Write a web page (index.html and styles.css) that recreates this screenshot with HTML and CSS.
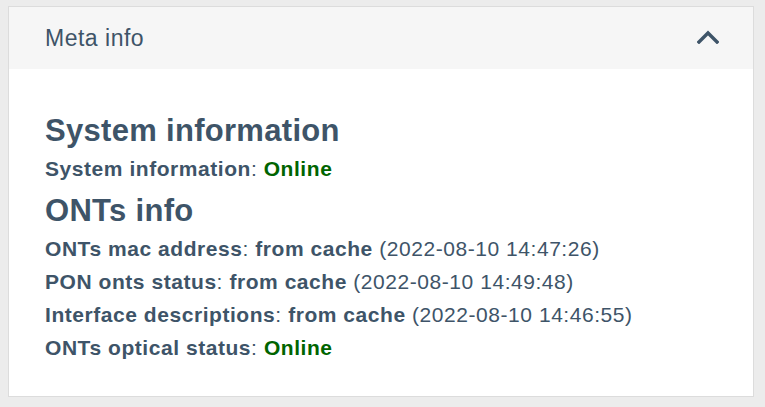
FILE: index.html
```html
<!DOCTYPE html>
<html>
<head>
<meta charset="utf-8">
<link rel="stylesheet" href="styles.css">
</head>
<body>
<div class="card">
  <div class="card-header">
    <span class="title">Meta info</span>
    <svg class="chevron" width="22" height="14" viewBox="0 0 22 14"><path d="M2 12 L11 3 L20 12" fill="none" stroke="#3e5468" stroke-width="3.4" stroke-linecap="square"/></svg>
  </div>
  <div class="card-body">
    <h3 class="section">System information</h3>
    <div class="row"><b>System information</b>: <b class="ok">Online</b></div>
    <h3 class="section second">ONTs info</h3>
    <div class="row"><b>ONTs mac address</b>: <b>from cache</b> (2022-08-10 14:47:26)</div>
    <div class="row"><b>PON onts status</b>: <b>from cache</b> (2022-08-10 14:49:48)</div>
    <div class="row"><b>Interface descriptions</b>: <b>from cache</b> (2022-08-10 14:46:55)</div>
    <div class="row"><b>ONTs optical status</b>: <b class="ok">Online</b></div>
  </div>
</div>
</body>
</html>
```
FILE: styles.css
```css
html, body {
  margin: 0;
  padding: 0;
  background: #ececec;
  font-family: "Liberation Sans", Arial, sans-serif;
  color: #3e5468;
}
body {
  padding: 6px 11px 8px 8px;
}
.card {
  background: #fff;
  border: 1px solid #dcdcdc;
  height: 391px;
  box-sizing: border-box;
}
.card-header {
  background: #f6f6f6;
  height: 62px;
  display: flex;
  align-items: center;
  justify-content: space-between;
  padding: 0 34px 0 36px;
}
.title {
  font-size: 23px;
  letter-spacing: 0.5px;
}
.chevron {
  display: block;
  margin-top: -2px;
}
.card-body {
  padding: 44px 36px 0 36px;
}
.section {
  margin: 0 0 3px 0;
  font-size: 31px;
  font-weight: bold;
  line-height: 36px;
  letter-spacing: 0.3px;
}
.section.second {
  margin-top: 8px;
}
.row {
  font-size: 21px;
  line-height: 33px;
  letter-spacing: 0.55px;
}
.row b {
  font-weight: bold;
}
.ok {
  color: #006400;
}
```
